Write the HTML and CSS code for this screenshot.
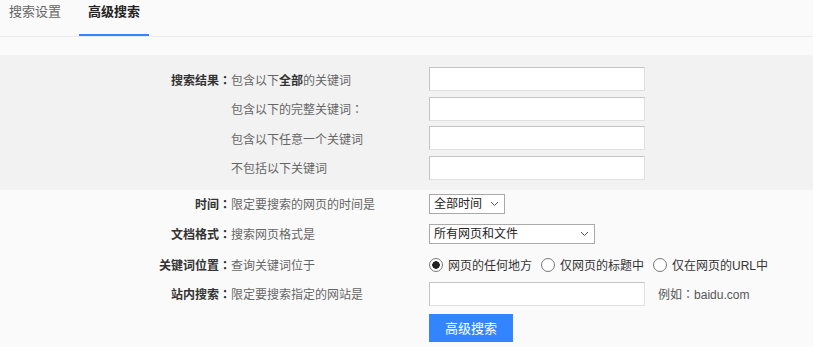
FILE: index.html
```html
<!DOCTYPE html>
<html>
  <head>
    <meta charset="utf-8">
    <title>高级搜索</title>
    <link rel="stylesheet" href="styles.css">
  </head>
  <body>
    <div class="tabs">
      <span class="tab">搜索设置</span>
      <span class="tab tab-active">高级搜索</span>
    </div>

    <form class="adv">
      <div class="group group-words">
        <div class="row">
          <span class="label">搜索结果<span class="colon">：</span></span>
          <span class="desc">包含以下<b>全部</b>的关键词</span>
          <input class="text" type="text">
        </div>
        <div class="row">
          <span class="label"></span>
          <span class="desc">包含以下的完整关键词<span class="colon">：</span></span>
          <input class="text" type="text">
        </div>
        <div class="row">
          <span class="label"></span>
          <span class="desc">包含以下任意一个关键词</span>
          <input class="text" type="text">
        </div>
        <div class="row">
          <span class="label"></span>
          <span class="desc">不包括以下关键词</span>
          <input class="text" type="text">
        </div>
      </div>

      <div class="group group-opts">
        <div class="row row-time">
          <span class="label">时间<span class="colon">：</span></span>
          <span class="desc">限定要搜索的网页的时间是</span>
          <div class="select select-time">
            <span>全部时间</span>
            <svg class="chev" width="9" height="6" viewBox="0 0 9 6"><path d="M1 1l3.5 3.5L8 1" fill="none" stroke="#555" stroke-width="1"/></svg>
          </div>
        </div>
        <div class="row row-type">
          <span class="label">文档格式<span class="colon">：</span></span>
          <span class="desc">搜索网页格式是</span>
          <div class="select select-type">
            <span>所有网页和文件</span>
            <svg class="chev" width="9" height="6" viewBox="0 0 9 6"><path d="M1 1l3.5 3.5L8 1" fill="none" stroke="#555" stroke-width="1"/></svg>
          </div>
        </div>
        <div class="row row-pos">
          <span class="label">关键词位置<span class="colon">：</span></span>
          <span class="desc">查询关键词位于</span>
          <div class="radios">
            <label class="radio"><input type="radio" name="q5" checked>网页的任何地方</label>
            <label class="radio"><input type="radio" name="q5">仅网页的标题中</label>
            <label class="radio"><input type="radio" name="q5">仅在网页的URL中</label>
          </div>
        </div>
        <div class="row row-site">
          <span class="label">站内搜索<span class="colon">：</span></span>
          <span class="desc">限定要搜索指定的网站是</span>
          <div class="site">
            <input class="text" type="text">
            <span class="tip">例如<span class="colon">：</span>baidu.com</span>
          </div>
        </div>
        <div class="row row-btn">
          <span class="label"></span>
          <span class="desc"></span>
          <button type="button" class="btn">高级搜索</button>
        </div>
      </div>
    </form>
  </body>
</html>
```

FILE: styles.css
```css
* {
  box-sizing: border-box;
}

body {
  margin: 0;
  background: #fff;
  font-family: "Liberation Sans", "Noto Sans CJK SC", sans-serif;
  font-size: 12px;
  color: #333;
}

/* centred full-width colon, as in the original */
.colon {
  font-family: "Noto Sans CJK TC", sans-serif;
}

.tabs {
  display: flex;
  gap: 9px;
  height: 37px;
  background: #fafafa;
  border-bottom: 1px solid #ebebeb;
}

.tab {
  padding: 0 9px;
  font-size: 13px;
  line-height: 23px;
  height: 36px;
  color: #666;
  border-bottom: 2px solid transparent;
}

.tab-active {
  color: #222;
  font-weight: bold;
  border-bottom-color: #3385ff;
}

.adv {
  margin: 0;
  padding-top: 18px;
  background: #fafafa;
}

.group-words {
  background: #f2f2f2;
  padding: 12px 0 10px;
  display: flex;
  flex-direction: column;
  gap: 5.5px;
}

.group-opts {
  padding: 4px 0 5px;
}

.row {
  display: grid;
  grid-template-columns: 231px 198px auto;
  align-items: center;
  height: 24px;
}

.label {
  text-align: right;
  font-weight: bold;
  color: #333;
}

.desc {
  color: #666;
}

.desc b {
  color: #333;
}

.text {
  width: 216px;
  height: 24px;
  margin: 0;
  padding: 0 4px;
  background: #fff;
  border: 1px solid #e0e0e0;
  border-top-color: #c4c4c4;
  border-left-color: #c4c4c4;
  outline: none;
}

.row-time {
  height: 20px;
}

.row-type {
  height: 20px;
  margin-top: 10px;
}

.row-pos {
  margin-top: 9px;
  height: 24px;
}

.row-site {
  margin-top: 5px;
}

.row-btn {
  margin-top: 8px;
  height: 28px;
}

.select {
  position: relative;
  height: 20px;
  background: #fff;
  border: 1px solid #a9a9a9;
  font-size: 12px;
  line-height: 18px;
  padding-left: 4px;
  color: #222;
}

.select-time {
  width: 76px;
}

.select-type {
  width: 166px;
}

.chev {
  position: absolute;
  right: 5px;
  top: 6px;
}

.radios {
  display: flex;
  align-items: center;
  gap: 9px;
  font-size: 12px;
  color: #333;
  white-space: nowrap;
}

.radio {
  display: flex;
  align-items: center;
  gap: 5px;
}

.radio input {
  appearance: none;
  -webkit-appearance: none;
  margin: 0;
  width: 14px;
  height: 14px;
  border: 1px solid #767676;
  border-radius: 50%;
  background: #fff;
}

.radio input:checked {
  background: radial-gradient(circle, #222 0 3.5px, #fff 4px);
}

.site {
  display: flex;
  align-items: center;
  gap: 13px;
}

.tip {
  font-size: 12px;
  color: #555;
}

.btn {
  width: 84px;
  height: 28px;
  border: none;
  background: #3385ff;
  color: #fff;
  font-family: inherit;
  font-size: 13px;
  cursor: pointer;
}
```
